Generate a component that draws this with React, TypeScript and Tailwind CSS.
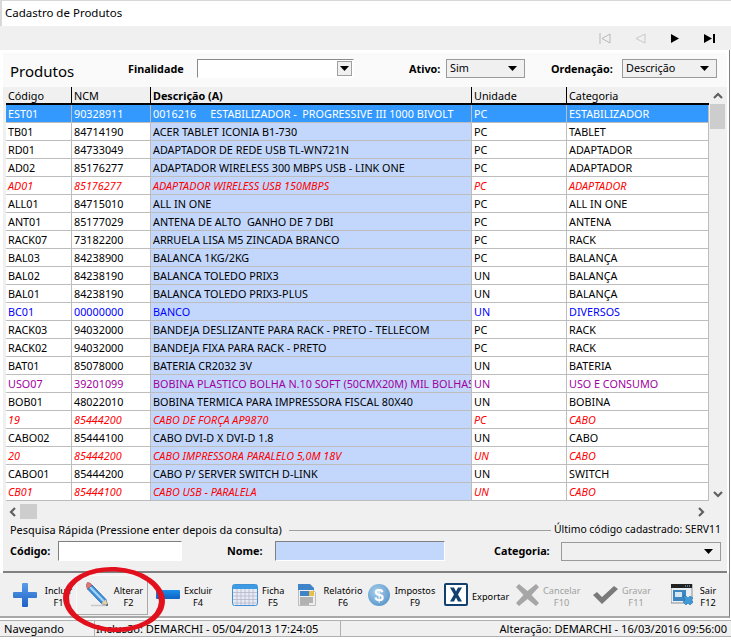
import React from "react";

type Row = { c: string; n: string; d: string; u: string; k: string; t?: "r" | "b" | "p" | "s" };
const rows: Row[] = [
  { c: "EST01", n: "90328911", d: "0016216     ESTABILIZADOR -  PROGRESSIVE III 1000 BIVOLT", u: "PC", k: "ESTABILIZADOR", t: "s" },
  { c: "TB01", n: "84714190", d: "ACER TABLET ICONIA B1-730", u: "PC", k: "TABLET" },
  { c: "RD01", n: "84733049", d: "ADAPTADOR DE REDE USB TL-WN721N", u: "PC", k: "ADAPTADOR" },
  { c: "AD02", n: "85176277", d: "ADAPTADOR WIRELESS 300 MBPS USB - LINK ONE", u: "PC", k: "ADAPTADOR" },
  { c: "AD01", n: "85176277", d: "ADAPTADOR WIRELESS USB 150MBPS", u: "PC", k: "ADAPTADOR", t: "r" },
  { c: "ALL01", n: "84715010", d: "ALL IN ONE", u: "PC", k: "ALL IN ONE" },
  { c: "ANT01", n: "85177029", d: "ANTENA DE ALTO  GANHO DE 7 DBI", u: "PC", k: "ANTENA" },
  { c: "RACK07", n: "73182200", d: "ARRUELA LISA M5 ZINCADA BRANCO", u: "PC", k: "RACK" },
  { c: "BAL03", n: "84238900", d: "BALANCA 1KG/2KG", u: "PC", k: "BALANÇA" },
  { c: "BAL02", n: "84238190", d: "BALANCA TOLEDO PRIX3", u: "UN", k: "BALANÇA" },
  { c: "BAL01", n: "84238190", d: "BALANCA TOLEDO PRIX3-PLUS", u: "UN", k: "BALANÇA" },
  { c: "BC01", n: "00000000", d: "BANCO", u: "UN", k: "DIVERSOS", t: "b" },
  { c: "RACK03", n: "94032000", d: "BANDEJA DESLIZANTE PARA RACK - PRETO - TELLECOM", u: "PC", k: "RACK" },
  { c: "RACK02", n: "94032000", d: "BANDEJA FIXA PARA RACK - PRETO", u: "PC", k: "RACK" },
  { c: "BAT01", n: "85078000", d: "BATERIA CR2032 3V", u: "UN", k: "BATERIA" },
  { c: "USO07", n: "39201099", d: "BOBINA PLASTICO BOLHA N.10 SOFT (50CMX20M) MIL BOLHAS", u: "UN", k: "USO E CONSUMO", t: "p" },
  { c: "BOB01", n: "48022010", d: "BOBINA TERMICA PARA IMPRESSORA FISCAL 80X40", u: "UN", k: "BOBINA" },
  { c: "19", n: "85444200", d: "CABO DE FORÇA AP9870", u: "PC", k: "CABO", t: "r" },
  { c: "CABO02", n: "85444100", d: "CABO DVI-D X DVI-D 1.8", u: "UN", k: "CABO" },
  { c: "20", n: "85444200", d: "CABO IMPRESSORA PARALELO 5,0M 18V", u: "UN", k: "CABO", t: "r" },
  { c: "CABO01", n: "85444200", d: "CABO P/ SERVER SWITCH D-LINK", u: "UN", k: "SWITCH" },
  { c: "CB01", n: "85444100", d: "CABO USB - PARALELA", u: "UN", k: "CABO", t: "r" },
];

const tone = (t?: Row["t"]) =>
  t === "s" ? "text-white" : t === "r" ? "text-[#ff0000] italic" : t === "b" ? "text-[#0000ff]" : t === "p" ? "text-[#a000a0]" : "text-black";

const cell = "pl-[2px] whitespace-pre overflow-hidden border-r border-b border-[#bdbdbd] leading-[17px]";

const Arrow = ({ d }: { d: string }) => (
  <svg width="12" height="12" viewBox="0 0 12 12"><path d={d} fill="none" stroke="#606060" strokeWidth="2.200" /></svg>
);
const Caret = () => (
  <svg width="9" height="5" viewBox="0 0 9 5"><path d="M0 0h9L4.500 5z" fill="#000" /></svg>
);

const Combo = ({ w, text }: { w: string; text?: string }) => (
  <div className={`${w} h-[19px] border border-[#9a9a9a] bg-[#f0f0f0] flex items-center justify-between pl-[3px] pr-[7px]`}>
    <span className="leading-[15px] -mt-[2px]">{text}</span>
    <Caret />
  </div>
);

const Plus = () => (
  <svg width="24" height="24" viewBox="0 0 24 24">
    <defs><linearGradient id="pl" x1="0" y1="0" x2="0" y2="1"><stop offset="0" stopColor="#5a9ce8" /><stop offset="1" stopColor="#1d62c8" /></linearGradient></defs>
    <path d="M9 1q0-1 1-1h4q1 0 1 1v8h8q1 0 1 1v4q0 1-1 1h-8v8q0 1-1 1h-4q-1 0-1-1v-8H1q-1 0-1-1v-4q0-1 1-1h8z" fill="url(#pl)" />
  </svg>
);
const Pencil = () => (
  <svg width="22" height="25" viewBox="0 0 22 25">
    <path d="M5 23.500h14" stroke="#c9c9c9" strokeWidth="1.500" />
    <path d="M6 3 20 17.500l1.500 6-6-2L1.500 7z" fill="#3f93dc" stroke="#1f5f9e" strokeWidth=".8" />
    <path d="M4 5 18 19.500" stroke="#a8d6f7" strokeWidth="2" />
    <path d="M1.500 7 6 3 4 1 1.500 .500 0 3.500z" fill="#d97b7b" stroke="#a04b4b" strokeWidth=".6" />
    <path d="M15.500 21.500 20 17.500l1.500 6z" fill="#f0cf9a" />
    <path d="M19.500 23.500h2V21.500z" fill="#333" />
  </svg>
);
const Minus = () => (
  <svg width="24" height="9" viewBox="0 0 24 9">
    <defs><linearGradient id="mn" x1="0" y1="0" x2="0" y2="1"><stop offset="0" stopColor="#1c8ee8" /><stop offset="1" stopColor="#0f62c4" /></linearGradient></defs>
    <rect width="24" height="9" rx="1" fill="url(#mn)" />
  </svg>
);
const Calendar = () => (
  <svg width="26" height="22" viewBox="0 0 26 22">
    <rect x=".5" y=".5" width="25" height="21" rx="2" fill="#e8ebf5" stroke="#3d8fd8" />
    <rect x="1" y="1" width="24" height="4" fill="#3d9be3" />
    <path d="M5 5v16M9 5v16M13 5v16M17 5v16M21 5v16M1 8.500h24M1 12h24M1 15.500h24M1 19h24" stroke="#b5b5c8" strokeWidth=".8" />
  </svg>
);
const Report = () => (
  <svg width="18" height="22" viewBox="0 0 18 22">
    <path d="M.5 3.500h12l5 5v13H.5z" fill="#eeeeee" stroke="#bdbdbd" />
    <path d="M0 0h12l4 4v2H0z" fill="#3f84c8" />
    <rect x="2" y="7" width="9" height="5" fill="#3f84c8" />
    <rect x="11" y="7" width="5" height="5" fill="#e5c14a" />
    <path d="M2 14h13M2 16h13M2 18h13M2 20h9" stroke="#777" strokeWidth="1" />
  </svg>
);
const Coin = () => (
  <svg width="22" height="22" viewBox="0 0 22 22">
    <defs><radialGradient id="cn" cx=".4" cy=".35" r=".8"><stop offset="0" stopColor="#a8cdec" /><stop offset="1" stopColor="#4f90c6" /></radialGradient></defs>
    <circle cx="11" cy="11" r="11" fill="url(#cn)" />
    <text x="11" y="17" textAnchor="middle" fontSize="17" fontWeight="700" fill="#fff" fontFamily="Liberation Sans, sans-serif">$</text>
  </svg>
);
const ExportIcon = () => (
  <svg width="24" height="23" viewBox="0 0 24 23">
    <rect x="1" y="1" width="22" height="21" rx="1" fill="#fff" stroke="#12406f" strokeWidth="2" />
    <path d="M6 4.500h4L12 8.500l2-4h4l-4 7 4 7h-4l-2-4-2 4H6l4-7z" fill="#12406f" />
  </svg>
);
const CancelIcon = () => (
  <svg width="23" height="22" viewBox="0 0 23 22">
    <path d="M3 0l8.500 7L20 0l3 3-7.500 8 7.500 8-3 3-8.500-7L3 22l-3-3 7.500-8L0 3z" fill="#a6a6a6" />
  </svg>
);
const CheckIcon = () => (
  <svg width="25" height="18" viewBox="0 0 25 18">
    <path d="M0 9l4-3 5 5L21 0l4 3L9 18z" fill="#7a7a7a" />
  </svg>
);
const ExitIcon = () => (
  <svg width="23" height="21" viewBox="0 0 23 21">
    <rect x="0" y="0" width="21" height="19" fill="#e9eef3" stroke="#333" strokeWidth=".5" />
    <rect x="0" y="0" width="21" height="4" fill="#222" />
    <path d="M14 2h5" stroke="#8fc7ee" strokeWidth="1" strokeDasharray="1 1" />
    <rect x="2" y="6" width="13" height="11" fill="#3d86c0" />
    <rect x="4" y="8" width="7" height="5" fill="#d4e6f4" />
    <path d="M12 12l3 0 2 2 2-2 3 2-2 2 2 2-3 3-2-2-2 2-3-3 2-2z" fill="#3f9ad8" stroke="#1e659e" strokeWidth=".5" />
  </svg>
);

type Tool = { a: string; b?: string; icon: React.ReactNode; pad: string; label: string; off?: boolean; act?: boolean };
const tools: Tool[] = [
  { a: "Incluir", b: "F1", icon: <Plus />, pad: "pl-[9px]", label: "w-[35px]" },
  { a: "Alterar", b: "F2", icon: <Pencil />, pad: "pl-[9px]", label: "w-[33px]", act: true },
  { a: "Excluir", b: "F4", icon: <Minus />, pad: "pl-[8px]", label: "w-[28px]" },
  { a: "Ficha", b: "F5", icon: <Calendar />, pad: "pl-[12px]", label: "w-[22px]" },
  { a: "Relatório", b: "F6", icon: <Report />, pad: "pl-[6px]", label: "w-[46px]" },
  { a: "Impostos", b: "F9", icon: <Coin />, pad: "pl-[4px]", label: "w-[42px]" },
  { a: "Exportar", icon: <ExportIcon />, pad: "pl-[8px]", label: "w-[32px]" },
  { a: "Cancelar", b: "F10", icon: <CancelIcon />, pad: "pl-[8px]", label: "w-[37px]", off: true },
  { a: "Gravar", b: "F11", icon: <CheckIcon />, pad: "pl-[13px]", label: "w-[28px]", off: true },
  { a: "Sair", b: "F12", icon: <ExitIcon />, pad: "pl-[19px]", label: "w-[20px]" },
];

const font = "font-['Noto_Sans','Open_Sans',sans-serif]";

export default function App() {
  return (
    <div className={`relative w-[731px] h-[640px] overflow-hidden bg-white text-[10.800px] text-black ${font}`}>
      <div className="h-[26px] border-t border-l-2 border-[#d8d8d8] pl-[3px] text-[11.500px] leading-[24px]">Cadastro de Produtos</div>

      <div className="h-[24px] bg-[#f0f0f0] flex items-center justify-end pr-[15px] gap-[23px]">
        <svg width="12" height="11" viewBox="0 0 12 11"><path d="M1 0v11M11 1 3 5.500l8 4.500z" fill="none" stroke="#b8b8b8" /></svg>
        <svg width="12" height="11" viewBox="0 0 12 11"><path d="M11 1 2 5.500l9 4.500z" fill="none" stroke="#c8c8c8" /></svg>
        <svg width="12" height="11" viewBox="0 0 12 11"><path d="M2 1l8 4.500L2 10z" fill="#000" /></svg>
        <svg width="12" height="11" viewBox="0 0 12 11"><path d="M0 1l8 4.500L0 10zM9 1h2v9H9z" fill="#000" /></svg>
      </div>

      <div className="ml-[3px] mr-[1px] border-r border-[#808080] pr-[2px] bg-white">
        <div className="h-[523px] bg-[#f0f0f0] border-t-[3px] border-white border-b-2 border-b-[#808080] flex flex-col">
          <div className="h-[34px] bg-[#fafafa] flex items-center pl-[7px]">
            <span className="text-[15px] w-[118px] mt-[2px]">Produtos</span>
            <span className="font-bold w-[69px] -mt-[2px]">Finalidade</span>
            <div className="w-[157px] h-[19px] border border-[#8a8a8a] border-r-white border-b-white bg-white flex items-center justify-end pr-[1px] -mt-[3px]">
              <div className="w-[15px] h-[15px] bg-[#f0f0f0] border border-[#a0a0a0] flex items-center justify-center"><Caret /></div>
            </div>
            <span className="font-bold ml-[55px] w-[37px] -mt-[2px]">Ativo:</span>
            <div className="-mt-[3px]"><Combo w="w-[79px]" text="Sim" /></div>
            <span className="font-bold ml-[26px] w-[71px] -mt-[2px]">Ordenação:</span>
            <div className="-mt-[3px]"><Combo w="w-[95px]" text="Descrição" /></div>
          </div>

          <div className="flex pl-[3px]">
            <div className="w-[703px] bg-white">
              <div className="h-[18px] bg-[#f0f0f0] border-b-2 border-black grid grid-cols-[66px_79px_321px_95px_142px] leading-[17px]">
                <div className="pl-[2px] border-r border-black">Código</div>
                <div className="pl-[2px] border-r border-black">NCM</div>
                <div className="pl-[2px] border-r border-black font-bold">Descrição (A)</div>
                <div className="pl-[2px] border-r border-black">Unidade</div>
                <div className="pl-[2px]">Categoria</div>
              </div>
              {rows.map((r) => (
                <div key={r.c + r.d} className={`h-[18px] grid grid-cols-[66px_79px_321px_95px_142px] ${tone(r.t)} ${r.t === "s" ? "bg-[#3399ff]" : "bg-white"}`}>
                  <div className={cell}>{r.c}</div>
                  <div className={cell}>{r.n}</div>
                  <div className={`${cell} ${r.t === "s" ? "" : "bg-[#c2d7fb]"}`}>{r.d}</div>
                  <div className={cell}>{r.u}</div>
                  <div className={cell}>{r.k}</div>
                </div>
              ))}
            </div>
            <div className="w-[17px] flex flex-col items-center">
              <div className="h-[17px] flex items-center"><Arrow d="M2 8l4-4 4 4" /></div>
              <div className="w-[15px] h-[25px] bg-[#cdcdcd]" />
              <div className="flex-1" />
              <div className="h-[17px] pt-[3px] flex items-center"><Arrow d="M2 4l4 4 4-4" /></div>
            </div>
          </div>

          <div className="h-[15px] mt-[3px] ml-[3px] w-[703px] flex items-center">
            <div className="w-[14px] flex justify-center"><Arrow d="M8 2 4 6l4 4" /></div>
            <div className="w-[17px] h-[15px] bg-[#cdcdcd]" />
            <div className="flex-1" />
            <div className="w-[17px] flex justify-center"><Arrow d="M4 2l4 4-4 4" /></div>
          </div>

          <div className="flex items-center h-[14px] mt-[4px] pl-[7px] pr-[6px]">
            <span className="text-[10.900px]">Pesquisa Rápida (Pressione enter depois da consulta)</span>
            <div className="flex-1 h-[1px] bg-[#a0a0a0] ml-[7px] mr-[3px]" />
            <span className="text-[10.400px]">Último código cadastrado: SERV11</span>
          </div>

          <div className="flex items-center h-[20px] mt-[4px] pl-[7px]">
            <span className="font-bold w-[48px]">Código:</span>
            <div className="w-[124px] h-[20px] bg-white border border-[#808080] border-r-white border-b-white" />
            <span className="font-bold ml-[45px] w-[48px]">Nome:</span>
            <div className="w-[170px] h-[20px] bg-[#c2d7fb] border border-[#808080] border-r-white border-b-white" />
            <span className="font-bold ml-[49px] w-[67px]">Categoria:</span>
            <div className="w-[160px] h-[19px] border border-[#9a9a9a] bg-[#f0f0f0] flex items-center justify-end pr-[7px]"><Caret /></div>
          </div>
        </div>
      </div>

      <div className="h-[45px] mr-[1px] bg-[#f0f0f0] border-b-2 border-[#a8a8a8] border-r border-r-[#808080] pl-[4px] flex items-center text-[9.200px] leading-[12px]">
        {tools.map((t) => (
          <div key={t.a} className={`w-[72px] h-[40px] shrink-0 flex items-center ${t.pad} ${t.act ? "border border-[#a8a8a8] border-l-[#f8f8f8] border-t-[#f8f8f8]" : ""}`}>
            <div className="shrink-0">{t.icon}</div>
            <div className={`${t.label} shrink-0 ml-[4px] mt-[5px] text-center whitespace-nowrap ${t.off ? "text-[#a0a0a0]" : ""}`}>
              <div>{t.a}</div>
              {t.b && <div>{t.b}</div>}
            </div>
          </div>
        ))}
      </div>

      <div className="h-[17px] mt-[2px] bg-[#f0f0f0] flex text-[11.100px] leading-[15px] border-y border-[#b0b0b0]">
        <div className="w-[94px] pl-[4px]">Navegando</div>
        <div className="w-[247px] border-x border-[#b0b0b0] pl-[1px] whitespace-nowrap">Inclusão: DEMARCHI - 05/04/2013 17:24:05</div>
        <div className="w-[100px] ml-[3px]" />
        <div className="flex-1 text-right pr-[4px] whitespace-nowrap">Alteração: DEMARCHI - 16/03/2016 09:56:00</div>
      </div>

      <svg className="absolute left-[60px] top-[563px]" width="112" height="74" viewBox="0 0 112 74">
        <g transform="rotate(3 54 36.500)">
          <path
            fillRule="evenodd"
            fill="#e2101c"
            d="M3 36.500a51 32.500 0 1 0 102 0a51 32.500 0 1 0-102 0zM9 36.500a45 28 0 1 1 90 0a45 28 0 1 1-90 0z"
          />
        </g>
      </svg>
    </div>
  );
}
